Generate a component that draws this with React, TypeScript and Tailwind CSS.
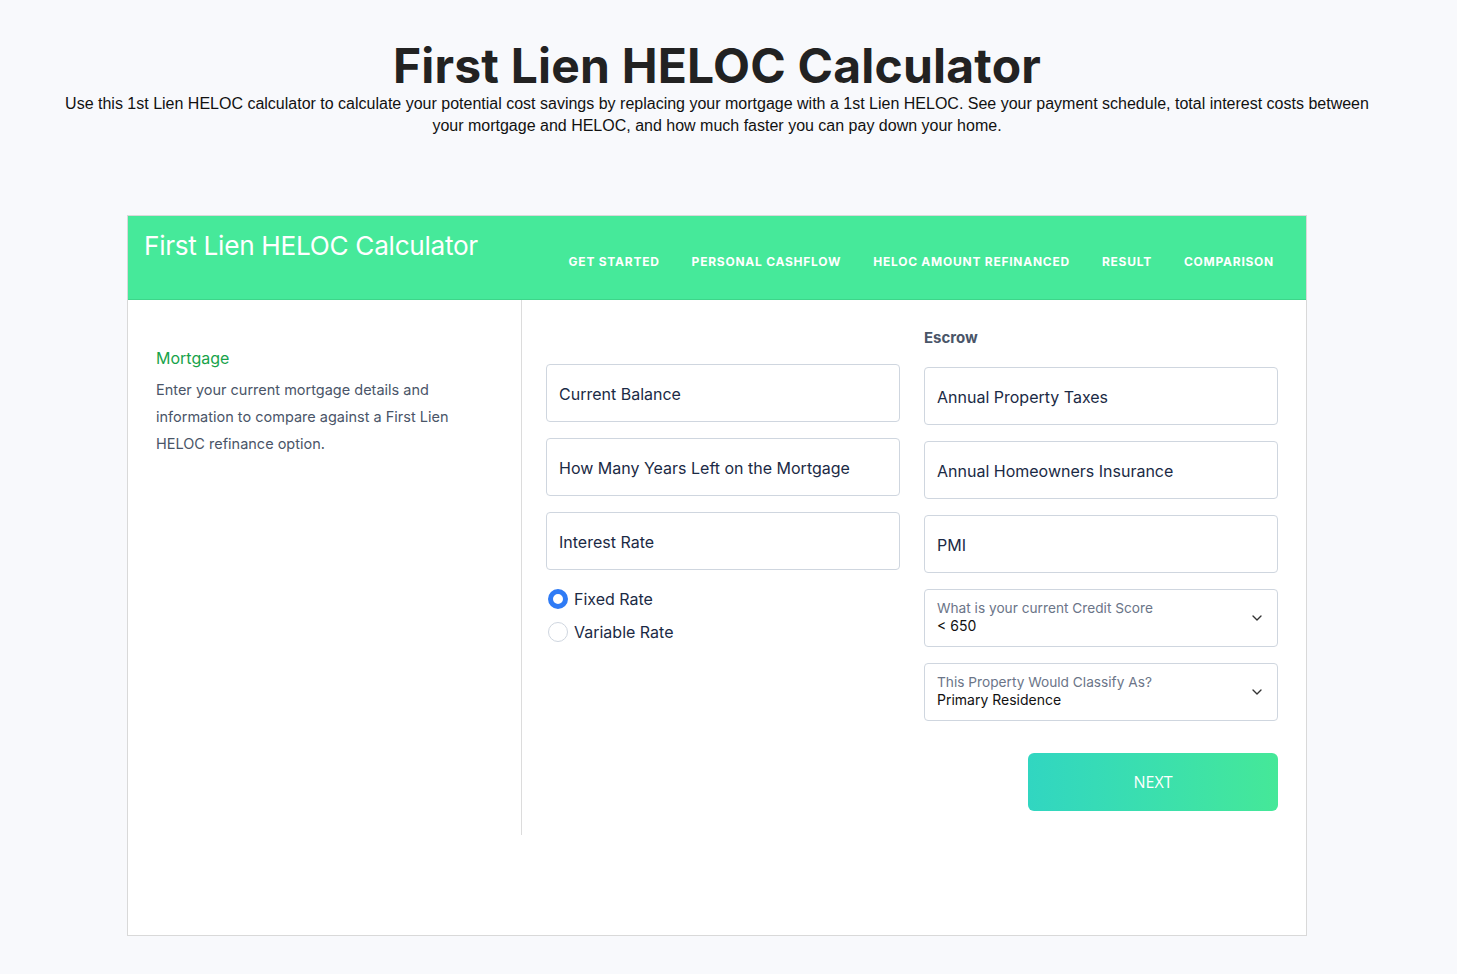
import {ChevronDown} from 'lucide-react';

const navItems = ['Get Started', 'Personal Cashflow', 'HELOC Amount Refinanced', 'Result', 'Comparison'];

function TextField({label}: {label: string}) {
  return (
    <div className="flex h-[58px] items-center rounded-[4px] border border-[#cfd6df] bg-white px-[12px] pt-[2px] text-[16px] text-[#1b2a45]">
      {label}
    </div>
  );
}

function SelectField({label, value}: {label: string; value: string}) {
  return (
    <div className="flex h-[58px] items-center justify-between rounded-[4px] border border-[#cfd6df] bg-white pl-[12px] pr-[12px]">
      <div className="mt-[-3px] flex flex-col leading-[18px]">
        <span className="text-[13.7px] text-[#6b7588]">{label}</span>
        <span className="text-[14px] text-[#111]">{value}</span>
      </div>
      <ChevronDown size={16} strokeWidth={2} className="text-[#333]" />
    </div>
  );
}

function Radio({label, checked}: {label: string; checked?: boolean}) {
  return (
    <label className="flex items-center gap-[6px] text-[16px] leading-[24px] text-[#1b2a45]">
      <span
        className={
          checked
            ? 'ml-[2px] h-[20px] w-[20px] rounded-full border-[5px] border-[#2f7bf5] bg-white'
            : 'ml-[2px] h-[20px] w-[20px] rounded-full border border-[#cfd6df] bg-white'
        }
      />
      {label}
    </label>
  );
}

export default function App() {
  return (
    <div className="min-h-[974px] bg-[#f8f9fc] pr-[23px] font-['Inter',sans-serif]">
      <header className="pt-[36px] text-center">
        <h1 className="text-[48px] font-bold leading-[60px] tracking-[0.2px] text-[#222]">
          First Lien HELOC Calculator
        </h1>
        <p className="mx-auto mt-[-3px] max-w-[1320px] font-['Liberation_Sans',Arial,sans-serif] text-[16px] leading-[22px] text-[#111]">
          Use this 1st Lien HELOC calculator to calculate your potential cost savings by replacing your mortgage with a 1st Lien HELOC. See your payment schedule, total interest costs between your mortgage and HELOC, and how much faster you can pay down your home.
        </p>
      </header>

      <section className="mx-auto mt-[78px] w-[1180px] border border-[#d9d9d9] bg-white">
        <div className="flex h-[84px] items-start justify-between border-b border-[#3dd68a] bg-[#46e99a] pl-[16px] pr-[32px]">
          <h2 className="mt-[13px] text-[26.2px] leading-[34px] font-normal tracking-[-0.3px] text-white">
            First Lien HELOC Calculator
          </h2>
          <nav className="mt-[37px] flex gap-[32px]">
            {navItems.map((item) => (
              <span key={item} className="text-[12px] font-bold uppercase tracking-[0.75px] text-white">
                {item}
              </span>
            ))}
          </nav>
        </div>

        <div className="flex pb-[100px]">
          <aside className="h-[535px] w-[394px] shrink-0 border-r border-[#dcdcdc] px-[28px] pt-[47px]">
            <h3 className="text-[16px] leading-[22px] text-[#17a34a]">Mortgage</h3>
            <p className="mt-[7px] text-[14.5px] leading-[27px] text-[#4a5568]">
              Enter your current mortgage details and information to compare against a First Lien HELOC refinance option.
            </p>
          </aside>

          <div className="grid flex-1 grid-cols-2 gap-[24px] pl-[24px] pr-[28px] pt-[28px]">
            <div className="flex flex-col gap-[16px] pt-[36px]">
              <TextField label="Current Balance" />
              <TextField label="How Many Years Left on the Mortgage" />
              <TextField label="Interest Rate" />
              <div className="flex flex-col gap-[9px] pt-[1px]">
                <Radio label="Fixed Rate" checked />
                <Radio label="Variable Rate" />
              </div>
            </div>

            <div className="flex flex-col">
              <div className="text-[15px] font-bold leading-[20px] text-[#4a5568]">Escrow</div>
              <div className="mt-[19px] flex flex-col gap-[16px]">
                <TextField label="Annual Property Taxes" />
                <TextField label="Annual Homeowners Insurance" />
                <TextField label="PMI" />
                <SelectField label="What is your current Credit Score" value="< 650" />
                <SelectField label="This Property Would Classify As?" value="Primary Residence" />
              </div>
              <div className="mt-[32px] flex justify-end">
                <button className="h-[58px] w-[250px] rounded-[6px] bg-gradient-to-r from-[#31d6c1] to-[#45e898] font-['Open_Sans',sans-serif] text-[16px] text-white">
                  NEXT
                </button>
              </div>
            </div>
          </div>
        </div>
      </section>
    </div>
  );
}
